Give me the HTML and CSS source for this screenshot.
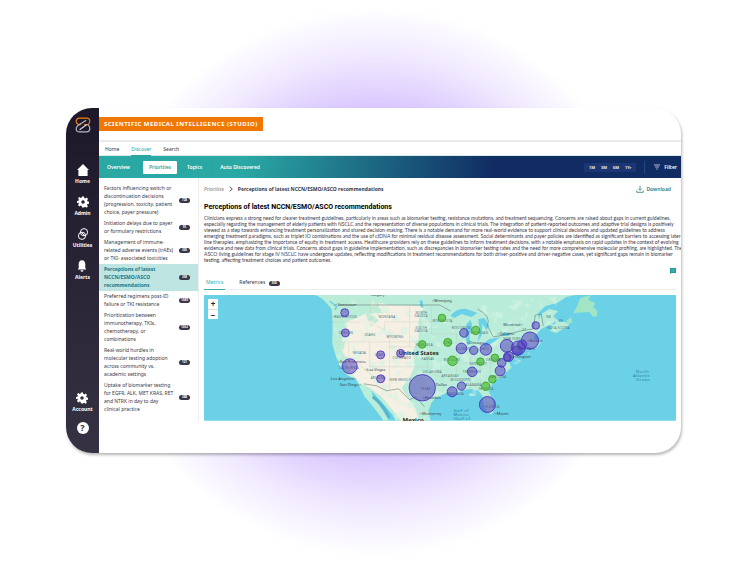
FILE: index.html
```html
<!DOCTYPE html>
<html lang="en">
<head>
<meta charset="utf-8">
<title>Scientific Medical Intelligence (Studio)</title>
<link rel="stylesheet" href="styles.css">
</head>
<body>
<div class="app">
  <nav class="rail" aria-label="Main">
    <svg class="logo" viewBox="0 0 16 16" fill="none" stroke-width="1.2" stroke-linejoin="round" stroke-linecap="round">
      <path d="M5.500 7.600Q1.200 7.600 1.200 4.300Q1.200 1.200 4.500 1.200H11.500Q14.800 1.200 14.800 4.200Q14.800 6.200 13 7.600H9.500" stroke="#f07d12"/>
      <path d="M13 7.600Q14.800 9 14.800 11.800Q14.800 14.800 11.500 14.800H4.500Q1.200 14.800 1.200 12Q1.200 9.900 3 8.600L10.800 3.600" stroke="#b4b9c0"/>
      <path d="M5 12.600 11.400 7.800" stroke="#d5d8dc"/>
    </svg>
    <a class="rail-item" href="#home">
      <svg viewBox="0 0 12 12" fill="#fff"><path d="M6 0 12 6H10.600V12H1.400V6H0Z"/></svg>
      <span>Home</span>
    </a>
    <a class="rail-item" href="#admin">
      <svg viewBox="0 0 24 24" fill="#fff"><path d="M10 1h4l.6 3.200 2 .9 2.700-1.900 2.800 2.800-1.900 2.700.9 2 3 .6v4l-3.200.6-.9 2 1.900 2.700-2.800 2.800-2.700-1.900-2 .9L14 23h-4l-.6-3.200-2-.9-2.700 1.900-2.800-2.800 1.900-2.700-.9-2L0 14v-4l3-.6.9-2L2 4.700 4.700 2l2.700 1.900 2-.9ZM12 8.500a3.500 3.500 0 1 0 0 7 3.500 3.500 0 0 0 0-7Z" fill-rule="evenodd"/></svg>
      <span>Admin</span>
    </a>
    <a class="rail-item" href="#utilities">
      <svg viewBox="0 0 12 12" fill="none" stroke="#fff"><circle cx="7" cy="4.200" r="3.600"/><circle cx="5" cy="7.800" r="3.600"/><path d="M4.600 4.600 7.400 7.400"/></svg>
      <span>Utilities</span>
    </a>
    <a class="rail-item" href="#alerts">
      <svg viewBox="0 0 12 12" fill="#fff"><path d="M6 .3C8.300.3 9.300 2.300 9.300 4.500V8L10.300 9.500H1.700L2.700 8V4.500C2.700 2.300 3.700.3 6 .3ZM4.500 10.200h3Q7.300 11.700 6 11.700T4.500 10.200Z"/></svg>
      <span>Alerts</span>
    </a>
    <a class="rail-item rail-bottom" href="#account">
      <svg viewBox="0 0 24 24" fill="#fff"><path d="M10 1h4l.6 3.200 2 .9 2.700-1.900 2.800 2.800-1.900 2.700.9 2 3 .6v4l-3.200.6-.9 2 1.900 2.700-2.800 2.800-2.700-1.900-2 .9L14 23h-4l-.6-3.200-2-.9-2.700 1.900-2.800-2.800 1.900-2.700-.9-2L0 14v-4l3-.6.9-2L2 4.700 4.700 2l2.700 1.900 2-.9ZM12 8.500a3.500 3.500 0 1 0 0 7 3.500 3.500 0 0 0 0-7Z" fill-rule="evenodd"/></svg>
      <span>Account</span>
    </a>
    <button class="help" type="button" aria-label="Help">?</button>
  </nav>

  <div class="page">
    <header class="brand"><h1>SCIENTIFIC MEDICAL INTELLIGENCE (STUDIO)</h1></header>
    <nav class="tabs" aria-label="Sections">
      <a href="#h">Home</a>
      <a href="#d" class="on">Discover</a>
      <a href="#s">Search</a>
    </nav>
    <div class="band">
      <button type="button">Overview</button>
      <button type="button" class="on">Priorities</button>
      <button type="button">Topics</button>
      <button type="button" class="split">Auto Discovered</button>
      <div class="ranges">
        <button type="button">1M</button>
        <button type="button">3M</button>
        <button type="button">6M</button>
        <button type="button">1Yr</button>
      </div>
      <button type="button" class="filter">
        <svg viewBox="0 0 6 6" fill="none" stroke="#dfe6f5" stroke-width=".8"><path d="M0 1H6M1.200 3H4.800M2.300 5H3.700"/></svg>
        Filter
      </button>
    </div>

    <div class="content">
      <ul class="topics">
        <li><a href="#t1">Factors influencing switch or<br>discontinuation decisions<br>(progression, toxicity, patient<br>choice, payer pressure)</a><b>728</b></li>
        <li><a href="#t2">Initiation delays due to payer<br>or formulary restrictions</a><b>95</b></li>
        <li><a href="#t3">Management of immune-<br>related adverse events (irAEs)<br>or TKI- associated toxicities</a><b>305</b></li>
        <li class="on"><a href="#t4">Perceptions of latest<br>NCCN/ESMO/ASCO<br>recommendations</a><b>358</b></li>
        <li><a href="#t5">Preferred regimens post-IO<br>failure or TKI resistance</a><b>1089</b></li>
        <li><a href="#t6">Prioritization between<br>immunotherapy, TKIs,<br>chemotherapy, or<br>combinations</a><b>1052</b></li>
        <li><a href="#t7">Real-world hurdles in<br>molecular testing adoption<br>across community vs.<br>academic settings</a><b>121</b></li>
        <li><a href="#t8">Uptake of biomarker testing<br>for EGFR, ALK, MET KRAS, RET<br>and NTRK in day to day<br>clinical practice</a><b>388</b></li>
      </ul>

      <main class="detail">
        <div class="crumbs">
          <a href="#p">Priorities</a>
          <svg viewBox="0 0 4 6" fill="none" stroke="#444" stroke-width=".9"><path d="M.7.700 3.300 3 .7 5.300"/></svg>
          <strong>Perceptions of latest NCCN/ESMO/ASCO recommendations</strong>
          <button type="button" class="download">
            <svg viewBox="0 0 8 8" fill="none" stroke="#2b8089" stroke-width=".8"><path d="M4 .8V5.200M2.400 3.700 4 5.300 5.600 3.700M.8 5.500V7.300H7.200V5.500"/></svg>
            Download
          </button>
        </div>
        <h2>Perceptions of latest NCCN/ESMO/ASCO recommendations</h2>
        <p>Clinicians express a strong need for clearer treatment guidelines, particularly in areas such as biomarker testing, resistance mutations, and treatment sequencing. Concerns are raised about gaps in current guidelines,<br>especially regarding the management of elderly patients with NSCLC and the representation of diverse populations in clinical trials. The integration of patient-reported outcomes and adaptive trial designs is positively<br>viewed as a step towards enhancing treatment personalization and shared decision-making. There is a notable demand for more real-world evidence to support clinical decisions and updated guidelines to address<br>emerging treatment paradigms, such as triplet IO combinations and the use of ctDNA for minimal residual disease assessment. Social determinants and payer policies are identified as significant barriers to accessing later-<br>line therapies, emphasizing the importance of equity in treatment access. Healthcare providers rely on these guidelines to inform treatment decisions, with a notable emphasis on rapid updates in the context of evolving<br>evidence and new data from clinical trials. Concerns about gaps in guideline implementation, such as discrepancies in biomarker testing rates and the need for more comprehensive molecular profiling, are highlighted. The<br>ASCO living guidelines for stage IV NSCLC have undergone updates, reflecting modifications in treatment recommendations for both driver-positive and driver-negative cases, yet significant gaps remain in biomarker<br>testing, affecting treatment choices and patient outcomes.</p>
        <button type="button" class="note" aria-label="Comment">
          <svg viewBox="0 0 6 6"><path d="M0 0H6V5H1.200L0 6Z" fill="#1c9c97"/><path d="M1.200 1.700H4.800M1.200 3.200H4.800" stroke="#8fd0cc" stroke-width=".5"/></svg>
        </button>
        <nav class="subtabs" aria-label="Views">
          <a href="#m" class="on">Metrics</a>
          <a href="#r">References <b>358</b></a>
        </nav>
        <div class="map">
          <svg class="chart" viewBox="203 295 473 126" role="img" aria-label="Map of the United States">
            <defs>
              <filter id="patches"><feTurbulence type="fractalNoise" baseFrequency=".1" numOctaves="4" seed="11"/><feColorMatrix values="0 0 0 0 .66  0 0 0 0 .9  0 0 0 0 .78  0 7 0 0 -3.900"/><feComposite in2="SourceGraphic" operator="in"/></filter>
              <filter id="forest"><feTurbulence type="fractalNoise" baseFrequency=".14" numOctaves="4" seed="5"/><feColorMatrix values="0 0 0 0 .5  0 0 0 0 .84  0 0 0 0 .67  0 7 0 0 -3"/><feComposite in2="SourceGraphic" operator="in"/></filter>
            </defs>
            <rect x="203" y="295" width="473" height="126" fill="#6ad1e7"/>
            <path fill="#b9ecd9" d="M315 295 322 299 328 305 331 309 332 323 331.500 343 335 356 339 366 346 375 355 379 359 387 364 397 371 405 377 413 383 421H388L383 412 377 403 372 396 371 391 377 398 385 407 392 415 395 421H430L428 411 431 403 436 397 447 393 455 395 461 391 470 389 478 391 482 396 483 404 486 411 491 415 494 409 492 399 488 391 492 384 502 375 511 368 508 361 511 353 523 350 532 345 534 336 541 329 549 325 556 321 554 325 550 331 556 333 569 325 565 322 559 322 553 316 558 311 549 309 541 314 538 320 538 313 545 306 557 303 566 297 575 295Z"/>
            <path fill="#f5f0e3" d="M372 300 388 305 424 306 418 320 418 338 412 352 414 366 409 378 401 388 408 399 415 409 418 421H401L390 408 381 397 369 388 359 383 348 371 345 360 341 350 341 333 345 322 356 318 368 312Z"/>
            <path filter="url(#patches)" fill="#000" opacity=".7" d="M332 309 345 300 388 305H450L556 297V330L505 375 482 396 436 397 428 411 430 421H396L372 387 359 385 346 374 335 356Z"/>
            <path filter="url(#forest)" fill="#000" d="M315 295H380L384 316 370 327 362 306 348 312 345 333 343 352 353 368 348 374 339 366 335 356 331.500 343 332 323 331 309 322 299Z"/>
            <path fill="#a1e5c5" d="M580 298 591 295 588 300 595 303 593 307 597 311 597 316 593 317 589 312 573 313 577 306ZM566 321 571 317 572 322 567 325Z"/>
            <g fill="#6ad1e7"><path d="M450 316Q456 308 466 309L477 313 471 317 461 314 454 318ZM466 324 470 320 472 326 469 335 470 344 467 345 465 338ZM478 319 484 318 489 326 486 330 482 324 481 336 477 342 479 333ZM482 344 489 339 500 337 495 341 485 347ZM498 336 504 332 511 333 508 336ZM419 300 422 301 423 308 420 307ZM491 411 494 409 495 412Z"/></g>
            <path d="M329 301 336 307 334 310" stroke="#6ad1e7" stroke-width="1.500" fill="none"/>
            <path d="M372 397Q382 404 389 418" stroke="#55b5d0" stroke-width="3" fill="none"/>
            <path d="M338 305H439L450 311M477 309Q491 316 487 326L493 337 505 335 520 331 533 329 535 315 541 314 543 326M363 384 376 386 386 391 398 389 409 400 415 397 424 407" fill="none" stroke="#66807e" stroke-width=".6"/>
            <path d="M332 322H360M334 342H426M370 305V323L384 330V322H409M348 342V356L374 378M369 342V367M389 329V367M369 367H431M389 347H437M409 306V347M389 367V388M409 322H431M431 306V334H456M427 347V372L443 378V393M456 334V381M470 352V390M453 363H498M480 363V390M490 350V381" fill="none" stroke="#c6ccba" stroke-width=".35"/>
            <g class="state">
              <text x="333" y="318">WASHINGTON</text><text x="338" y="334">OREGON</text><text x="378" y="318">MONTANA</text><text x="364" y="336">IDAHO</text><text x="386" y="338">WYOMING</text><text x="352" y="354">NEVADA</text><text x="374" y="356">UTAH</text><text x="392" y="359">COLORADO</text><text x="338" y="369">CALIFORNIA</text><text x="370" y="379">ARIZONA</text><text x="389" y="381">NEW MEXICO</text><text x="415" y="314">NORTH</text><text x="414" y="317">DAKOTA</text><text x="415" y="329">SOUTH</text><text x="414" y="332">DAKOTA</text><text x="432" y="322">MINNESOTA</text><text x="415" y="346">NEBRASKA</text><text x="421" y="360">KANSAS</text><text x="422" y="373">OKLAHOMA</text><text x="420" y="390">TEXAS</text><text x="443" y="344">IOWA</text><text x="443" y="361">MISSOURI</text><text x="441" y="377">ARKANSAS</text><text x="450" y="381">MISSISSIPPI</text><text x="451" y="329">WISCONSIN</text><text x="470" y="334">MICHIGAN</text><text x="456" y="350">ILLINOIS</text><text x="480" y="350">OHIO</text><text x="469" y="365">KENTUCKY</text><text x="485" y="361">VIRGINIA</text><text x="462" y="373">TENNESSEE</text><text x="465" y="386">ALABAMA</text><text x="478" y="390">GEORGIA</text><text x="489" y="378">CAROLINA</text><text x="485" y="408">FLORIDA</text><text x="503" y="340">NEW YORK</text><text x="522" y="331">VT</text><text x="546" y="318">NB</text><text x="559" y="322">PE</text><text x="547" y="329">NOVA SCOTIA</text><text x="445" y="395">LOUISIANA</text>
            </g>
            <g class="city">
              <text x="334" y="306">○Vancouver</text><text x="337" y="363">○San Francisco</text><text x="330" y="380">Los Angeles○</text><text x="339" y="386">San Diego○</text><text x="364" y="371">○Las Vegas</text><text x="431" y="302">○Winnipeg</text><text x="370" y="296">Calgary</text><text x="466" y="344">○Chicago</text><text x="503" y="326">Montreal○</text><text x="497" y="335">○Toronto</text><text x="527" y="342">○Boston</text><text x="517" y="350">New York</text><text x="508" y="358">Washington</text><text x="435" y="386">Dallas</text><text x="422" y="399">○Houston</text><text x="419" y="415">○Monterrey</text><text x="494" y="415">○Miami</text>
            </g>
            <g class="sea"><text x="453" y="412">Gulf of</text><text x="453" y="416">Mexico</text><text x="453" y="420">(Gulf of</text><text x="636" y="373">North</text><text x="633" y="377">Atlantic</text><text x="636" y="381">Ocean</text></g>
            <g class="land-name"><text x="398" y="355">United States</text><text x="402" y="422">Mexico</text></g>
            <g fill="#4b31b8" fill-opacity=".5" stroke="#4a35c2" stroke-width=".9">
              <circle cx="344" cy="312.700" r="4"/><circle cx="344.700" cy="333" r="4"/><circle cx="349" cy="366.400" r="7.500"/><circle cx="380" cy="355" r="4"/><circle cx="400" cy="353.500" r="4"/><circle cx="380" cy="379" r="4"/><circle cx="421.700" cy="388" r="13.200"/><circle cx="451.700" cy="392" r="5"/><circle cx="461" cy="386.300" r="4.200"/><circle cx="463.500" cy="333" r="4.300"/><circle cx="461" cy="348.500" r="5.300"/><circle cx="473.300" cy="350.500" r="4.200"/><circle cx="485.500" cy="349.500" r="5.800"/><circle cx="471.700" cy="372" r="4.800"/><circle cx="487" cy="404.800" r="8"/><circle cx="535.500" cy="325.500" r="3.800"/><circle cx="529.700" cy="340.700" r="8.600"/><circle cx="506.500" cy="346" r="6.500"/><circle cx="517" cy="350.800" r="4.800"/><circle cx="522" cy="344.500" r="4.500"/><circle cx="518" cy="348" r="7"/><circle cx="508.300" cy="356.700" r="5"/><circle cx="507" cy="357.500" r="3.800"/><circle cx="501.300" cy="363" r="4.300"/><circle cx="499.800" cy="371" r="5"/>
            </g>
            <g fill="#45b72b" fill-opacity=".65" stroke="#38a51e" stroke-width=".9">
              <circle cx="441.500" cy="318" r="3.800"/><circle cx="475.200" cy="330.500" r="4.200"/><circle cx="421.700" cy="344.500" r="3.800"/><circle cx="447.300" cy="342.500" r="4"/><circle cx="452" cy="361" r="4.800"/><circle cx="480" cy="361.800" r="3.800"/><circle cx="494.500" cy="358" r="3.800"/><circle cx="492" cy="379.500" r="3.800"/><circle cx="485.300" cy="386.500" r="4.200"/>
            </g>
          </svg>
          <div class="zoom"><button type="button">+</button><button type="button">−</button></div>
        </div>
      </main>
    </div>
  </div>
</div>
</body>
</html>
```
FILE: styles.css
```css
* { box-sizing: border-box; }
body {
  margin: 0;
  min-height: 100vh;
  padding: 108px 69px 110px 66px;
  font-family: "Noto Sans", "Open Sans", sans-serif;
  font-size: 5px;
  line-height: 8px;
  color: #3b3745;
  background: #fff radial-gradient(circle 275px at 50% 282px, #b48cff 0, #c9adff 40%, #d8c5ff 62%, #f0e9ff 82%, #fff 100%) no-repeat;
}
a { color: inherit; text-decoration: none; }
button { font: inherit; color: inherit; border: 0; background: none; padding: 0; }
svg { display: block; }

.app {
  display: flex;
  min-height: 345px;
  background: #fff;
  border-radius: 26px;
  overflow: hidden;
  box-shadow: 1px 2px 3px #00000048;
}

.rail {
  flex: 0 0 33px;
  display: flex;
  flex-direction: column;
  align-items: center;
  padding: 9px 0 19px;
  color: #fff;
  font-weight: 700;
  background: linear-gradient(#1c1729, #363244);
}
.logo { width: 16px; height: 16px; margin-bottom: 31px; }
.rail-item { display: flex; flex-direction: column; align-items: center; gap: 1px; margin-bottom: 11px; }
.rail-item svg { width: 12px; height: 12px; }
.rail-bottom { margin-top: auto; margin-bottom: 9px; }
.help {
  width: 12px; height: 12px;
  border-radius: 50%;
  background: #fff;
  color: #2e2a3b;
  font-size: 9px;
  line-height: 12px;
  font-weight: 700;
}

.page { flex: 1; min-width: 0; }
.brand { padding: 9px 0; border-bottom: 2px solid #ebebeb; display: flex; }
.brand h1 {
  margin: 0;
  padding: 0 5px;
  background: #f07800;
  color: #fff;
  font-size: 6px;
  line-height: 14px;
  letter-spacing: .08em;
}

.tabs { display: flex; gap: 12px; padding: 0 6px; height: 14px; border-bottom: 1px solid #d5eceb; }
.tabs a { line-height: 14px; }
.tabs .on { color: #27a3a1; border-bottom: 1px solid #27a3a1; height: 14px; }

.band {
  display: flex;
  align-items: center;
  height: 22px;
  padding: 0 4px 0 8px;
  color: #fff;
  font-weight: 600;
  background: linear-gradient(100deg, #29a8a4 25%, #112b63 68%);
}
.band .on { margin: 0 10px 0 13px; padding: 0 6px; background: #fff; color: #27a3a1; line-height: 13px; border-radius: 1px; }
.band .split { margin-left: 9px; padding-left: 8px; line-height: 20px; border-left: 1px solid #2aa09f; }
.ranges { margin-left: auto; display: flex; gap: 6px; padding: 0 5px; background: #1b3672; font-size: 4px; line-height: 9px; }
.filter { display: flex; align-items: center; gap: 4px; margin-left: 8px; padding-left: 9px; border-left: 1px solid #1d4b7f; line-height: 13px; }
.filter svg { width: 6px; height: 6px; }

.content { display: flex; }
.topics {
  flex: 0 0 100px;
  margin: 0;
  padding: 5px 0 0;
  list-style: none;
  border-right: 1px solid #eee;
}
.topics li { display: flex; align-items: center; justify-content: space-between; padding: 1px 8px 2px 5px; white-space: nowrap; }
.topics .on { background: #bfe5e3; color: #227783; font-weight: 700; }
b { display: inline-block; min-width: 11px; padding: 0 1px; border-radius: 3px; background: #3a3647; color: #fff; font-size: 3px; line-height: 5px; font-weight: 700; text-align: center; }

.detail { flex: 1; min-width: 0; padding: 7px 5px 0; }
.crumbs { display: flex; align-items: center; gap: 5px; }
.crumbs a { font-style: italic; color: #777; }
.crumbs > svg { width: 4px; height: 6px; }
.download { display: flex; align-items: center; gap: 2px; margin-left: auto; padding-right: 5px; color: #2b8089; font-weight: 600; }
.download svg { width: 8px; height: 8px; }
h2 { margin: 10px 0 3px; color: #000; font-family: Roboto, sans-serif; font-weight: 700; font-size: 7px; line-height: 9px; }
p { margin: 0; font-family: Lato, sans-serif; line-height: 6px; white-space: nowrap; }
.note { display: block; margin: 5px 0 0 auto; }
.note svg { width: 6px; height: 6px; }
.subtabs { display: flex; gap: 12px; height: 16px; border-bottom: 1px solid #eee; margin-bottom: 5px; }
.subtabs a { padding: 4px 2px 0; height: 16px; }
.subtabs .on { color: #36aaa7; border-bottom: 1px solid #36aaa7; }
.subtabs b { margin-left: 2px; }

.map { position: relative; border-radius: 1px; overflow: hidden; }
.chart { width: 100%; }
.zoom { position: absolute; left: 4px; top: 4px; width: 10px; background: #fff; border-radius: 1px; }
.zoom button { display: block; width: 10px; line-height: 10px; font-size: 8px; font-weight: 700; color: #222; }
.zoom button + button { border-top: 1px solid #ddd; line-height: 9px; }
.state { font-size: 3px; fill: #526f75; letter-spacing: .1em; }
.city { font-size: 4px; fill: #374548; }
.sea { font-size: 4px; fill: #287e95; letter-spacing: .1em; }
.land-name { font-size: 6px; font-weight: 700; fill: #20292b; }
```
